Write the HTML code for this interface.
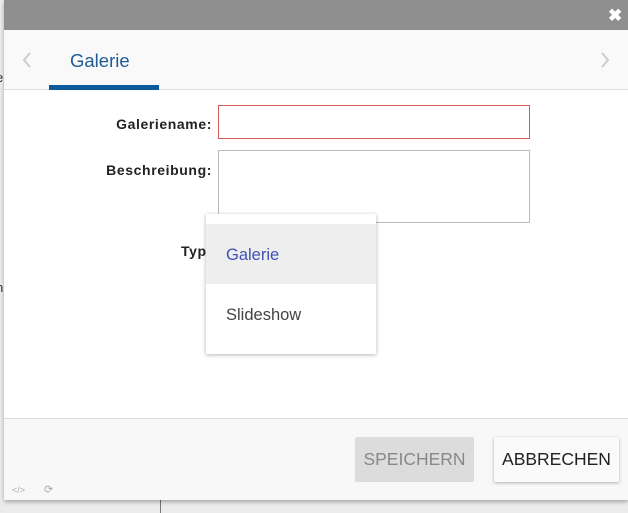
<!DOCTYPE html>
<html><head><style>
*{margin:0;padding:0;box-sizing:border-box}
body{width:628px;height:513px;background:#ececec;position:relative;overflow:hidden;font-family:"Liberation Sans",Arial,sans-serif}
.a{position:absolute}
.l{font-size:14px;font-weight:bold;color:#222;letter-spacing:.6px;text-align:right;width:208px;left:0}
</style></head><body>
<div class="a" style="left:-4px;top:70px;font-size:13px;color:#333">e</div>
<div class="a" style="left:-4px;top:280px;font-size:13px;color:#333">n</div>
<div class="a" style="left:160px;top:500px;width:1px;height:13px;background:#777"></div>
<div class="a" style="left:4px;top:0;width:624px;height:500px;background:#fff;box-shadow:0 2px 4px rgba(0,0,0,.3)">
 <div class="a" style="left:0;top:0;width:624px;height:30px;background:#8f8f8f"></div>
 <div class="a" style="left:604px;top:6px;color:#fff;font-size:17px;font-weight:bold">✖</div>
 <div class="a" style="left:0;top:30px;width:624px;height:60px;background:#f9f9f9;border-bottom:1px solid #ddd"></div>
 <svg class="a" style="left:18px;top:52px" width="10" height="16"><path d="M8 1L2 8L8 15" stroke="#ccc" stroke-width="2" fill="none"/></svg>
 <svg class="a" style="left:596px;top:52px" width="10" height="16"><path d="M2 1L8 8L2 15" stroke="#ccc" stroke-width="2" fill="none"/></svg>
 <div class="a" style="left:66px;top:50px;font-size:18.5px;color:#1e5a96">Galerie</div>
 <div class="a" style="left:45px;top:85px;width:110px;height:5px;background:#0b5a9c"></div>
 <div class="a l" style="top:106px;line-height:36px;height:36px">Galeriename:</div>
 <div class="a" style="left:214px;top:105px;width:312px;height:34px;border:1px solid #d25c5c"></div>
 <div class="a l" style="top:152px;line-height:36px">Beschreibung:</div>
 <div class="a" style="left:214px;top:150px;width:312px;height:73px;border:1px solid #bbb"></div>
 <div class="a" style="left:177px;top:243px;font-size:14px;font-weight:bold;color:#222;letter-spacing:.6px">Typ</div>
 <div class="a" style="left:202px;top:214px;width:170px;height:140px;background:#fff;box-shadow:0 1px 4px rgba(0,0,0,.3)">
  <div class="a" style="left:0;top:10px;width:170px;height:60px;background:#eee"></div>
  <div class="a" style="left:20px;top:32px;font-size:16.5px;color:#3f51b5">Galerie</div>
  <div class="a" style="left:20px;top:92px;font-size:16.5px;color:#444">Slideshow</div>
 </div>
 <div class="a" style="left:0;top:418px;width:624px;height:82px;background:#f8f8f8;border-top:1px solid #ddd"></div>
 <div class="a" style="left:351px;top:437px;width:119px;height:45px;background:#dcdcdc;border-radius:2px;color:#888;font-size:17.5px;line-height:45px;text-align:center">SPEICHERN</div>
 <div class="a" style="left:490px;top:437px;width:125px;height:45px;background:#fafafa;border-radius:2px;box-shadow:0 1px 3px rgba(0,0,0,.3);color:#222;font-size:17.5px;line-height:45px;text-align:center">ABBRECHEN</div>
 <div class="a" style="left:8px;top:485px;font-size:9px;color:#aaa">&lt;/&gt;</div>
 <div class="a" style="left:40px;top:483px;font-size:11px;color:#aaa">⟳</div>
</div>
</body></html>
